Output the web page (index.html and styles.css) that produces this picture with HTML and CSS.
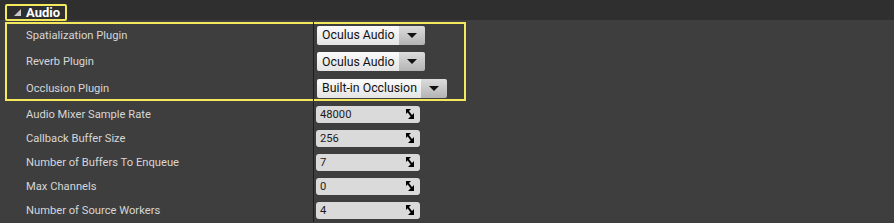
FILE: index.html
```html
<!DOCTYPE html>
<html lang="en">
<head>
    <meta charset="UTF-8">
    <title>Audio settings</title>
    <link rel="stylesheet" href="styles.css">
</head>
<body>
    <div class="category-bar">
        <div class="category-tag">
            <svg class="expander" width="7" height="7" viewBox="0 0 7 7"><polygon points="7,0 7,7 0,7" fill="#c8c8c8"/></svg>
            <span>Audio</span>
        </div>
    </div>

    <div class="details">
        <div class="highlight">
            <div class="row row-first">
                <div class="name">Spatialization Plugin</div>
                <div class="value">
                    <div class="combo"><span class="combo-text">Oculus Audio</span><span class="combo-btn"><i class="arrow"></i></span></div>
                </div>
            </div>
            <div class="row row-tall">
                <div class="name">Reverb Plugin</div>
                <div class="value">
                    <div class="combo"><span class="combo-text">Oculus Audio</span><span class="combo-btn"><i class="arrow"></i></span></div>
                </div>
            </div>
            <div class="row row-tall">
                <div class="name">Occlusion Plugin</div>
                <div class="value">
                    <div class="combo"><span class="combo-text">Built-in Occlusion</span><span class="combo-btn"><i class="arrow"></i></span></div>
                </div>
            </div>
        </div>

        <div class="row">
            <div class="name">Audio Mixer Sample Rate</div>
            <div class="value num-cell"><div class="num"><span>48000</span><svg class="drag" width="8" height="10" viewBox="0 0 8 10"><polygon points="0,0 5,0 0,5" /><line x1="1" y1="1" x2="7" y2="9" stroke="#000" stroke-width="2"/><polygon points="8,10 2,10 8,4" /></svg></div></div>
        </div>
        <div class="row">
            <div class="name">Callback Buffer Size</div>
            <div class="value num-cell"><div class="num"><span>256</span><svg class="drag" width="8" height="10" viewBox="0 0 8 10"><polygon points="0,0 5,0 0,5" /><line x1="1" y1="1" x2="7" y2="9" stroke="#000" stroke-width="2"/><polygon points="8,10 2,10 8,4" /></svg></div></div>
        </div>
        <div class="row">
            <div class="name">Number of Buffers To Enqueue</div>
            <div class="value num-cell"><div class="num"><span>7</span><svg class="drag" width="8" height="10" viewBox="0 0 8 10"><polygon points="0,0 5,0 0,5" /><line x1="1" y1="1" x2="7" y2="9" stroke="#000" stroke-width="2"/><polygon points="8,10 2,10 8,4" /></svg></div></div>
        </div>
        <div class="row">
            <div class="name">Max Channels</div>
            <div class="value num-cell"><div class="num"><span>0</span><svg class="drag" width="8" height="10" viewBox="0 0 8 10"><polygon points="0,0 5,0 0,5" /><line x1="1" y1="1" x2="7" y2="9" stroke="#000" stroke-width="2"/><polygon points="8,10 2,10 8,4" /></svg></div></div>
        </div>
        <div class="row">
            <div class="name">Number of Source Workers</div>
            <div class="value num-cell"><div class="num"><span>4</span><svg class="drag" width="8" height="10" viewBox="0 0 8 10"><polygon points="0,0 5,0 0,5" /><line x1="1" y1="1" x2="7" y2="9" stroke="#000" stroke-width="2"/><polygon points="8,10 2,10 8,4" /></svg></div></div>
        </div>
    </div>
</body>
</html>
```

FILE: styles.css
```css
body {
    margin: 0;
    background-color: #3e3e3e;
    font-family: Roboto, "Liberation Sans", sans-serif;
    color: #d6d6d6;
    overflow: hidden;
}
.category-bar {
    height: 20px;
    background-color: #2f2f2f;
    padding: 1px 0 0 5px;
    box-sizing: border-box;
}
.category-tag {
    display: inline-flex;
    align-items: center;
    width: 62px;
    height: 17px;
    box-sizing: border-box;
    border: 2px solid #f4e85c;
    border-radius: 2px;
    padding-left: 7px;
    color: #ffffff;
    font-weight: bold;
    font-size: 13px;
}
.expander {
    margin-right: 5px;
    margin-top: 1px;
}
.details {
    padding-left: 5px;
}
.highlight {
    width: 461px;
    margin-top: 2px;
    margin-bottom: 1px;
    box-shadow: inset 0 0 0 2px #f4e85c;
}
.row {
    display: flex;
    height: 24px;
    font-size: 11.2px;
}
.row-first {
    height: 26px;
}
.row-tall {
    height: 27px;
}
.highlight .row:last-child {
    height: 26px;
}
.name {
    width: 308px;
    padding-left: 21px;
    box-sizing: border-box;
    display: flex;
    align-items: center;
}
.value {
    border-left: 1px solid #1c1c1c;
    padding-left: 3px;
    display: flex;
    align-items: center;
}
.num-cell {
    padding-left: 2px;
}
.combo {
    display: flex;
    height: 19px;
    border-radius: 2px;
    overflow: hidden;
    font-size: 12.3px;
    color: #111111;
}
.combo-text {
    display: flex;
    align-items: center;
    padding: 0 4px 0 5px;
    background: linear-gradient(#fbfbfb, #e4e4e4);
}
.combo-btn {
    width: 26px;
    display: flex;
    align-items: center;
    justify-content: center;
    background: linear-gradient(#dcdcdc, #b4b4b4);
}
.arrow {
    width: 0;
    height: 0;
    border-left: 5px solid transparent;
    border-right: 5px solid transparent;
    border-top: 5px solid #111111;
}
.num {
    width: 104px;
    height: 17px;
    box-sizing: border-box;
    background-color: #dadada;
    border-radius: 3px;
    display: flex;
    align-items: center;
    justify-content: space-between;
    padding: 0 6px 0 4px;
    color: #1a1a1a;
    font-size: 11.2px;
}
.drag {
    fill: #000000;
}
```
